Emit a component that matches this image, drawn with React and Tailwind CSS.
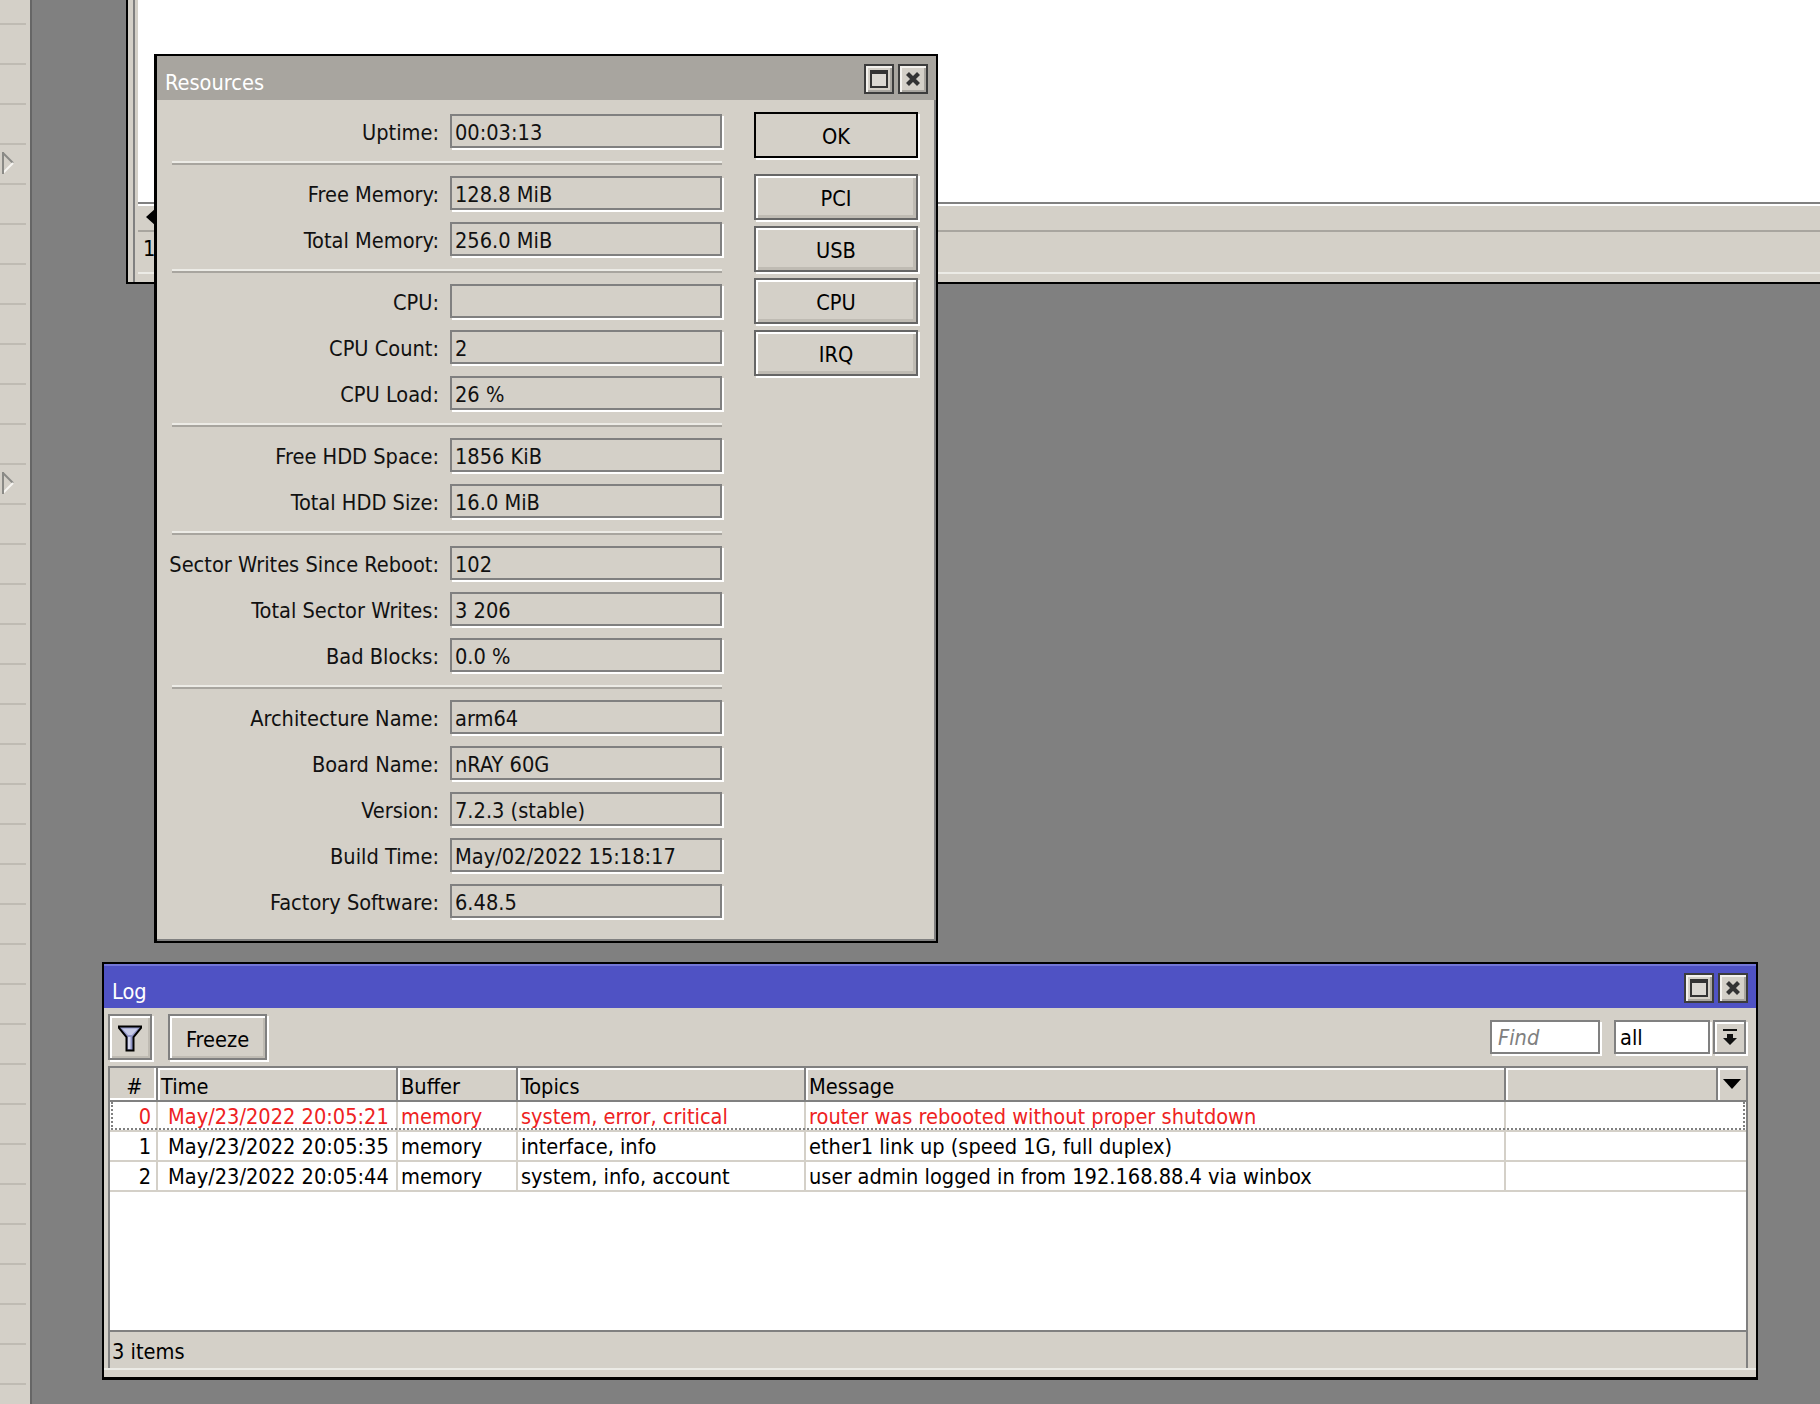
import React from "react";

const F = "[font-family:'DejaVu_Sans_Condensed','DejaVu_Sans',sans-serif]";

function Btn({ label, def }) {
  return (
    <div className={`flex h-[46px] w-[164px] items-center justify-center border-2 pt-[4px] text-[21.6px] shadow-[2px_2px_0_#ffffff] ${def ? "border-black" : "border-[#666666] [box-shadow:inset_2px_2px_0_#ffffff,inset_-3px_-3px_0_#bfbbb3,2px_2px_0_#ffffff]"}`}>
      {label}
    </div>
  );
}

function WinBtn({ kind }) {
  return (
    <div className="flex h-[30px] w-[30px] items-center justify-center border-2 border-[#3c3c3c] bg-[#d4d0c8] shadow-[inset_2px_2px_0_#f4f2ee,inset_-2px_-2px_0_#a8a59f]">
      {kind === "max" ? (
        <div className="h-[18px] w-[18px] border-2 border-t-4 border-[#333333] bg-[#dbd8d2]" />
      ) : (
        <svg width="14" height="14" viewBox="0 0 14 14"><path d="M1.5 1.5 12.5 12.5M12.5 1.5 1.5 12.5" stroke="#333" strokeWidth="4.2" /></svg>
      )}
    </div>
  );
}

function Field({ children }) {
  return (
    <div className="flex h-[34px] w-[272px] items-center border-2 border-[#808080] pt-[5px] pl-[3px] text-[21.6px] whitespace-nowrap text-[#111111] shadow-[2px_2px_0_#ffffff]">{children}</div>
  );
}

function Row({ label, value }) {
  return (
    <div className="flex h-[36px] items-start">
      <div className="flex h-[34px] w-[282px] items-center justify-end pt-[5px] text-[21.6px] whitespace-nowrap text-[#111111]">{label}</div>
      <div className="ml-[11px]"><Field>{value}</Field></div>
    </div>
  );
}

const Sep = () => <div className="my-[11px] ml-[15px] h-[4px] w-[550px] border-t-2 border-b-2 border-t-[#ecebe6] border-b-[#a8a59f]" />;

const sections = [
  [["Uptime:", "00:03:13"]],
  [["Free Memory:", "128.8 MiB"], ["Total Memory:", "256.0 MiB"]],
  [["CPU:", ""], ["CPU Count:", "2"], ["CPU Load:", "26 %"]],
  [["Free HDD Space:", "1856 KiB"], ["Total HDD Size:", "16.0 MiB"]],
  [["Sector Writes Since Reboot:", "102"], ["Total Sector Writes:", "3 206"], ["Bad Blocks:", "0.0 %"]],
  [["Architecture Name:", "arm64"], ["Board Name:", "nRAY 60G"], ["Version:", "7.2.3 (stable)"], ["Build Time:", "May/02/2022 15:18:17"], ["Factory Software:", "6.48.5"]],
];

function Triangle({ className }) {
  return (
    <svg className={className} width="14" height="24" viewBox="0 0 14 24">
      <path d="M3 2 13 12" stroke="#8a8a86" strokeWidth="2" />
      <path d="M13 12 3 22" stroke="#f6f5f1" strokeWidth="2" />
      <path d="M3 1V23" stroke="#8a8a86" strokeWidth="2" />
    </svg>
  );
}

const rows = [
  ["0", "May/23/2022 20:05:21", "memory", "system, error, critical", "router was rebooted without proper shutdown"],
  ["1", "May/23/2022 20:05:35", "memory", "interface, info", "ether1 link up (speed 1G, full duplex)"],
  ["2", "May/23/2022 20:05:44", "memory", "system, info, account", "user admin logged in from 192.168.88.4 via winbox"],
];

function HeadCell({ w, children, center, sunken }) {
  return (
    <div className={`flex h-full items-center border-r-2 border-[#808080] pt-[7px] pl-[3px] text-[21.6px] text-black ${w} ${center ? "justify-center" : ""} ${sunken ? "shadow-[inset_-2px_-2px_0_#ffffff]" : "shadow-[inset_2px_2px_0_#ffffff]"}`}>{children}</div>
  );
}

export default function App() {
  return (
    <div className={`relative h-[1404px] w-[1820px] overflow-hidden bg-[#808080] text-black ${F}`}>
      {/* left strip */}
      <div className="relative flex h-full w-[32px] flex-col border-r-2 border-[#666666] bg-[#d4d0c8]">
        {Array.from({ length: 35 }).map((_, i) => (
          <div key={i} className={`h-[40px] w-[26px] shrink-0 border-b-2 border-[#bfbbb3] ${i === 0 ? "-mt-[15px]" : ""}`} />
        ))}
        <Triangle className="absolute left-0 top-[151px]" />
        <Triangle className="absolute left-0 top-[471px]" />
      </div>

      {/* window behind */}
      <div className="absolute left-[126px] top-[-20px] flex h-[304px] w-[1720px] flex-col border-2 border-black bg-[#d4d0c8]">
        <div className="ml-[5px] flex flex-1 flex-col border-l-2 border-[#808080] pb-[8px] pl-[3px]">
          <div className="flex-1 bg-white" />
          <div className="flex h-[30px] items-center border-y-2 border-t-[#808080] border-b-[#a8a59f] pl-[8px] shadow-[inset_0_2px_0_#ffffff]">
            <svg width="14" height="18" viewBox="0 0 14 18"><path d="M0 9 10 0V18Z" fill="#000" /></svg>
          </div>
          <div className="flex h-[42px] items-center border-b-2 border-[#ecebe6] pb-[6px] pl-[5px] text-[21.6px]">1</div>
        </div>
      </div>

      {/* Resources */}
      <div className="absolute left-[154px] top-[54px] h-[889px] w-[784px] border-2 border-l-[3px] border-black bg-[#d4d0c8] shadow-[inset_-2px_-2px_0_#808080]">
        <div className="flex h-[44px] items-center justify-between bg-[#a8a59f] pr-[8px] pl-[8px]">
          <span className="pt-[11px] text-[21.6px] text-white">Resources</span>
          <div className="mt-[2px] flex gap-[4px]"><WinBtn kind="max" /><WinBtn /></div>
        </div>
        <div className="flex pt-[14px]">
          <div className="w-[568px]">
            {sections.map((s, i) => (
              <div key={i}>
                {i > 0 && <Sep />}
                <div className="flex flex-col gap-[10px]">
                  {s.map(([l, v]) => <Row key={l} label={l} value={v} />)}
                </div>
              </div>
            ))}
          </div>
          <div className="-mt-[2px] ml-[29px] flex flex-col gap-[6px]">
            <div className="mb-[10px]"><Btn label="OK" def /></div>
            <Btn label="PCI" /><Btn label="USB" /><Btn label="CPU" /><Btn label="IRQ" />
          </div>
        </div>
      </div>

      {/* Log */}
      <div className="absolute left-[102px] top-[962px] flex h-[418px] w-[1656px] flex-col border-2 border-b-[3px] border-black bg-[#d4d0c8]">
        <div className="flex h-[44px] shrink-0 items-center justify-between border-t-2 border-[#7376d6] bg-[#4f52c4] pr-[8px] pl-[8px]">
          <span className="pt-[11px] text-[21.6px] text-white">Log</span>
          <div className="mt-[2px] flex gap-[4px]"><WinBtn kind="max" /><WinBtn /></div>
        </div>
        <div className="flex h-[58px] shrink-0 items-center pr-[10px] pl-[4px]">
          <div className="flex h-[46px] w-[44px] items-center justify-center border-2 border-[#808080] pt-[2px] shadow-[inset_2px_2px_0_#ffffff,inset_-2px_-2px_0_#bfbbb3,2px_2px_0_#ffffff]">
            <svg width="24" height="27" viewBox="0 0 24 27">
              <path d="M1 1.5H23V3L15.5 12V25.5H8.5V12L1 3Z" fill="#8f94c6" stroke="#000" strokeWidth="2" strokeLinejoin="miter" />
              <path d="M4 3.5H20L14 10H10Z" fill="#c6cae6" />
              <path d="M10 12H12.5V24H10Z" fill="#d4d6ea" />
            </svg>
          </div>
          <div className="ml-[16px] flex h-[46px] w-[99px] items-center justify-center border-2 border-[#808080] pt-[6px] text-[21.6px] shadow-[inset_2px_2px_0_#ffffff,inset_-2px_-2px_0_#bfbbb3,2px_2px_0_#ffffff]">Freeze</div>
          <div className="flex-1" />
          <div className="flex h-[34px] w-[110px] items-center border-2 border-[#808080] bg-white pt-[3px] pl-[6px] text-[21.6px] text-[#808080] italic shadow-[2px_2px_0_#ffffff]">Find</div>
          <div className="ml-[14px] flex h-[34px] w-[96px] items-center border-2 border-[#808080] bg-white pt-[3px] pl-[4px] text-[21.6px] shadow-[2px_2px_0_#ffffff]">all</div>
          <div className="ml-[3px] flex h-[34px] w-[33px] items-center justify-center border-2 border-[#808080] shadow-[inset_2px_2px_0_#ffffff,2px_2px_0_#ffffff]">
            <svg width="14" height="16" viewBox="0 0 14 16"><path d="M0 1H14" stroke="#111" strokeWidth="2" /><path d="M4 5H10V9H14L7 16 0 9H4Z" fill="#111" /></svg>
          </div>
        </div>
        <div className="mr-[8px] ml-[4px] flex min-h-0 flex-1 flex-col border-x-2 border-[#808080] bg-white">
          <div className="flex h-[36px] shrink-0 border-y-2 border-[#808080] bg-[#d4d0c8]">
            <HeadCell w="w-[48px]" center sunken>#</HeadCell>
            <HeadCell w="w-[240px]">Time</HeadCell>
            <HeadCell w="w-[120px]">Buffer</HeadCell>
            <HeadCell w="w-[288px]">Topics</HeadCell>
            <HeadCell w="w-[700px]">Message</HeadCell>
            <div className="h-full w-[212px] border-r-2 border-[#808080] shadow-[inset_2px_2px_0_#ffffff]" />
            <div className="flex h-full flex-1 items-center justify-center shadow-[inset_2px_2px_0_#ffffff]">
              <svg width="18" height="10" viewBox="0 0 18 10"><path d="M0 0H18L9 10Z" fill="#000" /></svg>
            </div>
          </div>
          {rows.map((r, i) => (
            <div key={i} className={`relative flex h-[30px] shrink-0 border-b-2 border-[#d4d0c8] text-[21.6px] ${i === 0 ? "text-[#ee2222]" : "text-black"}`}>
              <div className="flex w-[48px] items-center justify-end border-r-2 border-[#d4d0c8] pt-[2px] pr-[5px]">{r[0]}</div>
              <div className="flex w-[240px] items-center border-r-2 border-[#d4d0c8] pt-[2px] pl-[10px] whitespace-nowrap">{r[1]}</div>
              <div className="flex w-[120px] items-center border-r-2 border-[#d4d0c8] pt-[2px] pl-[3px]">{r[2]}</div>
              <div className="flex w-[288px] items-center border-r-2 border-[#d4d0c8] pt-[2px] pl-[3px] whitespace-nowrap">{r[3]}</div>
              <div className="flex w-[700px] items-center border-r-2 border-[#d4d0c8] pt-[2px] pl-[3px] whitespace-nowrap">{r[4]}</div>
              <div className="flex-1" />
              {i === 0 && <div className="absolute inset-x-[1px] top-0 bottom-0 border-x-2 border-b-2 border-dotted border-[#808080]" />}
            </div>
          ))}
          <div className="flex-1" />
        </div>
        <div className="mr-[8px] ml-[4px] flex h-[38px] shrink-0 items-center border-x-2 border-t-2 border-[#808080] bg-[#d4d0c8] pt-[4px] pl-[2px] text-[21.6px]">3 items</div>
        <div className="h-[9px] shrink-0 border-t-2 border-[#ecebe6]" />
      </div>
    </div>
  );
}
